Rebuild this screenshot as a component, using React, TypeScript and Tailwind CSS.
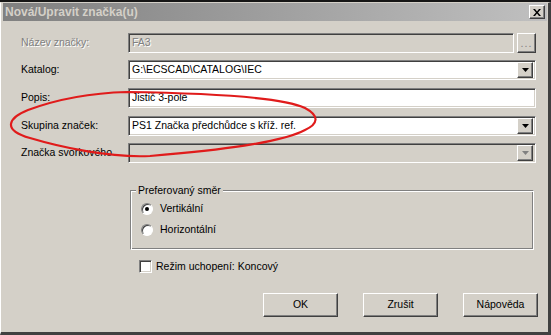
import React from "react";

const sunken =
  "border border-t-[#808080] border-l-[#808080] border-b-white border-r-white shadow-[inset_1px_1px_0_#404040,inset_-1px_-1px_0_#d4d0c8]";
const raised =
  "border border-t-white border-l-white border-b-[#404040] border-r-[#404040] shadow-[inset_-1px_-1px_0_#808080]";

function Arrow({ disabled }: { disabled?: boolean }) {
  return (
    <div className={`w-[16px] h-[16px] bg-[#d4d0c8] flex items-center justify-center shrink-0 ${raised}`}>
      <svg width="7" height="4" viewBox="0 0 7 4">
        <path d="M0 0h7L3.5 4z" fill={disabled ? "#808080" : "#000"} />
      </svg>
    </div>
  );
}

function Label({ text, disabled }: { text: string; disabled?: boolean }) {
  return (
    <div
      className={`w-[107px] shrink-0 whitespace-nowrap overflow-visible ${
        disabled ? "text-[#808080] [text-shadow:1px_1px_0_#fff]" : "text-black"
      }`}
    >
      {text}
    </div>
  );
}

function Select({ value, disabled }: { value: string; disabled?: boolean }) {
  return (
    <div
      className={`flex-1 h-[20px] flex items-center pl-[2px] pr-[2px] ${sunken} ${
        disabled ? "bg-[#d4d0c8]" : "bg-white"
      }`}
    >
      <span className="flex-1 pl-[1px] truncate">{value}</span>
      <Arrow disabled={disabled} />
    </div>
  );
}

function Btn({ text }: { text: string }) {
  return (
    <button className={`w-[75px] h-[24px] bg-[#d4d0c8] flex items-center justify-center ${raised}`}>
      {text}
    </button>
  );
}

export default function App() {
  return (
    <div className="w-[551px] h-[335px] relative overflow-hidden bg-[#d4d0c8] flex flex-col font-['Liberation_Sans',Arial,sans-serif] text-[10.5px] text-black">
      <div className="h-[2px] bg-[#161616] shrink-0" />
      <div className="flex-1 flex flex-col border-l border-l-white border-t border-t-[#d4d0c8] border-r-[3px] border-r-[#404040] border-b-[3px] border-b-[#404040] pl-[2px]">
        {/* Title bar */}
        <div className="h-[18px] shrink-0 flex items-center bg-gradient-to-r from-[#808080] to-[#c0c0c0] pl-[2px] pr-[2px] mr-[1px]">
          <span className="font-bold text-[12px] text-[#d4d0c8]">Nová/Upravit značka(u)</span>
          <div className={`ml-auto w-[16px] h-[14px] bg-[#d4d0c8] flex items-center justify-center ${raised}`}>
            <svg width="8" height="7" viewBox="0 0 8 7">
              <path d="M0 0h2l2 2.5L6 0h2L5 3.5 8 7H6L4 4.5 2 7H0l3-3.5z" fill="#000" />
            </svg>
          </div>
        </div>

        {/* Fields */}
        <div className="flex flex-col pl-[18px] pr-[12px] mt-[12px]">
          <div className="h-[20px] flex items-center">
            <Label text="Název značky:" disabled />
            <div className={`flex-1 h-[20px] flex items-center pl-[3px] bg-[#d4d0c8] ${sunken}`}>
              <span className="text-[#808080] [text-shadow:1px_1px_0_#fff]">FA3</span>
            </div>
            <div className={`ml-[3px] w-[19px] h-[20px] bg-[#d4d0c8] flex items-end justify-center pb-[4px] text-[#808080] ${raised}`}>
              <span className="leading-none tracking-[1px]">...</span>
            </div>
          </div>
          <div className="h-[20px] flex items-center mt-[7px]">
            <Label text="Katalog:" />
            <Select value="G:\ECSCAD\CATALOG\IEC" />
          </div>
          <div className="h-[20px] flex items-center mt-[8px]">
            <Label text="Popis:" />
            <div className={`flex-1 h-[20px] flex items-center pl-[3px] bg-white ${sunken}`}>Jistič 3-pole</div>
          </div>
          <div className="h-[20px] flex items-center mt-[8px]">
            <Label text="Skupina značek:" />
            <Select value="PS1 Značka předchůdce s kříž. ref." />
          </div>
          <div className="h-[20px] flex items-center mt-[7px]">
            <Label text="Značka svorkového" />
            <Select value="" disabled />
          </div>
        </div>

        {/* Group box */}
        <div className="relative ml-[127px] mr-[14px] mt-[27px] h-[60px] border border-t-[#808080] border-l-[#808080] border-b-white border-r-white shadow-[inset_1px_1px_0_#fff,inset_-1px_-1px_0_#808080]">
          <span className="absolute -top-[7px] left-[5px] px-[2px] bg-[#d4d0c8] leading-[12px]">Preferovaný směr</span>
          <div className="flex flex-col pl-[10px] pt-[12px] gap-[9px]">
            <div className="flex items-center h-[12px]">
              <div className="w-[12px] h-[12px] rounded-full bg-white border border-t-[#808080] border-l-[#808080] border-b-white border-r-white shadow-[inset_1px_1px_0_#404040] flex items-center justify-center">
                <div className="w-[4px] h-[4px] rounded-full bg-black" />
              </div>
              <span className="ml-[7px]">Vertikální</span>
            </div>
            <div className="flex items-center h-[12px]">
              <div className="w-[12px] h-[12px] rounded-full bg-white border border-t-[#808080] border-l-[#808080] border-b-white border-r-white shadow-[inset_1px_1px_0_#404040]" />
              <span className="ml-[7px]">Horizontální</span>
            </div>
          </div>
        </div>

        {/* Checkbox */}
        <div className="flex items-center ml-[136px] mt-[10px] h-[13px]">
          <div className={`w-[13px] h-[13px] bg-white ${sunken}`} />
          <span className="ml-[4px]">Režim uchopení: Koncový</span>
        </div>

        {/* Buttons */}
        <div className="flex justify-end gap-[25px] pr-[10px] mt-[20px]">
          <Btn text="OK" />
          <Btn text="Zrušit" />
          <Btn text="Nápověda" />
        </div>
      </div>

      {/* hand-drawn annotation */}
      <svg className="absolute left-0 top-0 pointer-events-none" width="551" height="335">
        <path
          d="M127 92 C200 93,280 96,305 108 C320 116,318 124,305 130 C280 143,220 150,150 156 C110 158,60 147,30 138 C2 130,8 118,28 110 C55 100,90 93,127 92"
          fill="none"
          stroke="#e01b1b"
          strokeWidth="2.2"
        />
      </svg>
    </div>
  );
}
